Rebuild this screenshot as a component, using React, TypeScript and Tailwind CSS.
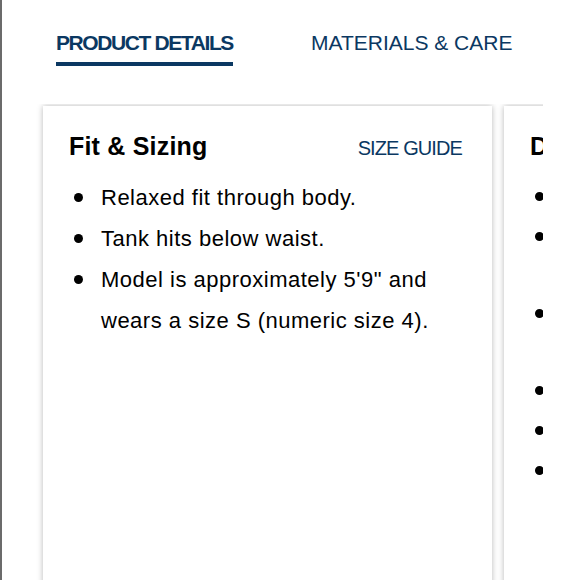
import React from 'react';

const fitItems = [
  'Relaxed fit through body.',
  'Tank hits below waist.',
  'Model is approximately 5\'9" and wears a size S (numeric size 4).',
];

const detailItems = [
  ['Sleeveless.'],
  ['Scoop', 'neckline.'],
  ['Soft jersey', 'fabric.'],
  ['Pull-on.'],
  ['Tank.'],
  ['Imported.'],
];

const Bullet: React.FC<{ children: React.ReactNode; top?: string }> = ({ children, top = 'pt-[16px]' }) => (
  <li className="flex">
    <span className={`w-[32px] shrink-0 pl-[5px] ${top}`}>
      <span className="block w-[9px] h-[9px] rounded-full bg-black" />
    </span>
    <span className="flex-1">{children}</span>
  </li>
);

const App: React.FC = () => {
  return (
    <div className="w-[580px] h-[580px] overflow-hidden bg-white border-l-2 border-[#6b6b6b] font-['Liberation_Sans',Arial,sans-serif] text-black">
      <div className="flex pl-[54px] pt-[30px] gap-[78px] text-[21px] text-[#0b3862]">
        <div className="flex flex-col">
          <span className="font-bold leading-[26px] tracking-[-1.4px]">PRODUCT DETAILS</span>
          <span className="mt-[6px] h-[4px] bg-[#0b3862]" />
        </div>
        <span className="leading-[26px]">MATERIALS &amp; CARE</span>
      </div>

      <div className="mt-[38px] w-[541px] overflow-hidden pl-[41px] pt-[2px] pb-[10px]">
        <div className="flex gap-[12px]">
          <div className="w-[449px] shrink-0 h-[500px] bg-white shadow-[0_0_6px_rgba(0,0,0,0.28)] pl-[26px] pr-[26px] pt-[24px]">
            <div className="flex items-baseline justify-between pr-[4px]">
              <h3 className="font-bold text-[25px] leading-[32px] tracking-[0.2px]">
                Fit &amp; Sizing
              </h3>
              <a className="text-[20px] text-[#0b3862] tracking-[-0.9px]">
                SIZE GUIDE
              </a>
            </div>
            <ul className="mt-[14px] text-[22px] leading-[41px] tracking-[0.5px]">
              {fitItems.map(t => (
                <Bullet key={t}>{t}</Bullet>
              ))}
            </ul>
          </div>

          <div className="w-[449px] shrink-0 h-[500px] bg-white shadow-[0_0_6px_rgba(0,0,0,0.28)] px-[26px] pt-[24px]">
            <h3 className="font-bold text-[25px] leading-[32px]">
              Details
            </h3>
            <ul className="mt-[16px] flex flex-col gap-[3px] text-[22px] leading-[37px] tracking-[0.5px]">
              {detailItems.map(lines => (
                <Bullet key={lines.join(' ')} top="pt-[14px]">
                  {lines.map(l => (
                    <span key={l} className="block">{l}</span>
                  ))}
                </Bullet>
              ))}
            </ul>
          </div>
        </div>
      </div>
    </div>
  );
};

export default App;
